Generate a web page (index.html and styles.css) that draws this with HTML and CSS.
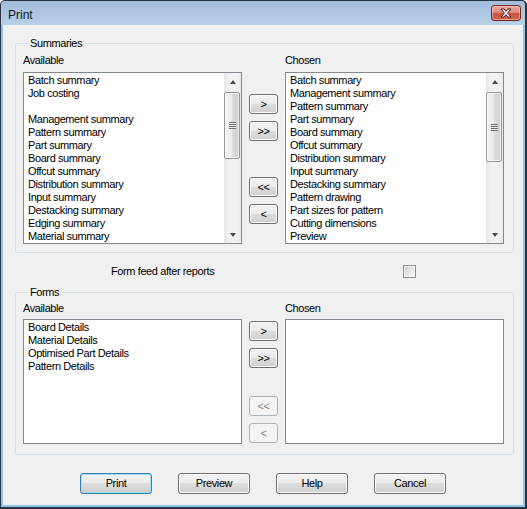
FILE: index.html
```html
<!DOCTYPE html>
<html>
<head>
<meta charset="utf-8">
<link rel="stylesheet" href="styles.css">
</head>
<body>
<div class="window">
  <div class="titlebar">
    <span class="title">Print</span>
    <div class="close">
      <svg width="12" height="10" viewBox="0 0 12 10">
        <polygon points="1,1 4,1 6,3.4 8,1 11,1 7.6,5 11,9 8,9 6,6.6 4,9 1,9 4.4,5" fill="#fff" stroke="#4a1f1a" stroke-width="1" stroke-linejoin="round"/>
      </svg>
    </div>
  </div>
  <div class="client">
    <fieldset class="group summaries">
      <legend>Summaries</legend>
      <div class="picker">
        <div class="lbl">Available</div>
        <div></div>
        <div class="lbl">Chosen</div>
        <div class="listbox tall">
          <ul class="items">
            <li>Batch summary</li>
            <li>Job costing</li>
            <li>&nbsp;</li>
            <li>Management summary</li>
            <li>Pattern summary</li>
            <li>Part summary</li>
            <li>Board summary</li>
            <li>Offcut summary</li>
            <li>Distribution summary</li>
            <li>Input summary</li>
            <li>Destacking summary</li>
            <li>Edging summary</li>
            <li>Material summary</li>
          </ul>
          <div class="scrollbar">
            <div class="sb-btn"><span class="arr up"></span></div>
            <div class="sb-track"><div class="thumb t1"><span class="grip"></span></div></div>
            <div class="sb-btn"><span class="arr down"></span></div>
          </div>
        </div>
        <div class="movers m-sum">
          <button class="btn mv b1">&gt;</button>
          <button class="btn mv b2">&gt;&gt;</button>
          <button class="btn mv b3">&lt;&lt;</button>
          <button class="btn mv b4">&lt;</button>
        </div>
        <div class="listbox tall">
          <ul class="items">
            <li>Batch summary</li>
            <li>Management summary</li>
            <li>Pattern summary</li>
            <li>Part summary</li>
            <li>Board summary</li>
            <li>Offcut summary</li>
            <li>Distribution summary</li>
            <li>Input summary</li>
            <li>Destacking summary</li>
            <li>Pattern drawing</li>
            <li>Part sizes for pattern</li>
            <li>Cutting dimensions</li>
            <li>Preview</li>
          </ul>
          <div class="scrollbar">
            <div class="sb-btn"><span class="arr up"></span></div>
            <div class="sb-track"><div class="thumb t2"><span class="grip"></span></div></div>
            <div class="sb-btn"><span class="arr down"></span></div>
          </div>
        </div>
      </div>
    </fieldset>

    <div class="feed-row">
      <span class="feed-label">Form feed after reports</span>
      <span class="checkbox"><span class="check-inner"></span></span>
    </div>

    <fieldset class="group forms">
      <legend>Forms</legend>
      <div class="picker">
        <div class="lbl">Available</div>
        <div></div>
        <div class="lbl">Chosen</div>
        <div class="listbox short">
          <ul class="items">
            <li>Board Details</li>
            <li>Material Details</li>
            <li>Optimised Part Details</li>
            <li>Pattern Details</li>
          </ul>
        </div>
        <div class="movers m-forms">
          <button class="btn mv b1">&gt;</button>
          <button class="btn mv b2">&gt;&gt;</button>
          <button class="btn mv b3" disabled>&lt;&lt;</button>
          <button class="btn mv b4" disabled>&lt;</button>
        </div>
        <div class="listbox short"></div>
      </div>
    </fieldset>

    <div class="actions">
      <button class="btn wide default">Print</button>
      <button class="btn wide">Preview</button>
      <button class="btn wide">Help</button>
      <button class="btn wide">Cancel</button>
    </div>
  </div>
</div>
</body>
</html>
```

FILE: styles.css
```css
* { box-sizing: border-box; }
html, body { margin: 0; padding: 0; background: #ffffff; }
body {
  font-family: "Liberation Sans", Arial, sans-serif;
  font-size: 11px;
  letter-spacing: -0.4px;
  color: #000;
}

.window {
  width: 527px;
  height: 509px;
  border-style: solid;
  border-color: #2b3542;
  border-width: 1px 2px 2px 1px;
  border-radius: 5px 5px 0 0;
  padding: 0 2px 2px 2px;
  background: linear-gradient(to bottom, #a3bcda 0, #b8cfe8 24px, #8cc6ea 24px, #8cc6ea 100%);
  display: flex;
  flex-direction: column;
}

.titlebar {
  height: 24px;
  flex: none;
  display: flex;
  justify-content: space-between;
  align-items: flex-start;
  padding-top: 4px;
}
.title {
  font-size: 12px;
  line-height: 16px;
  letter-spacing: 0;
  margin: 2px 0 0 5px;
  color: #101820;
}
.close {
  width: 30px;
  height: 16px;
  margin-right: 2px;
  border: 1px solid #6b2a22;
  border-radius: 3px;
  background: linear-gradient(to bottom, #e9aa9f 0, #dc8a7c 45%, #c8503e 55%, #d0654f 100%);
  box-shadow: inset 0 0 0 1px rgba(255, 220, 210, 0.45);
  display: flex;
  align-items: center;
  justify-content: center;
}
.close svg { display: block; }

.client {
  flex: 1;
  background: #f0f0f0;
  display: flex;
  flex-direction: column;
  padding: 0 9px 0 12px;
}

fieldset.group {
  margin: 11px 0 0 0;
  border: 1px solid #d5dfe5;
  border-radius: 3px;
  min-width: 0;
}
fieldset.summaries { padding: 4px 8px 8px 7px; }
fieldset.forms { margin-top: 7px; padding: 3px 8px 10px 7px; }

legend {
  padding: 0 1px;
  margin-left: 6px;
  line-height: 14px;
}

.picker {
  display: grid;
  grid-template-columns: 219px 29px 219px;
  column-gap: 7px;
}
.lbl { line-height: 13px; margin-bottom: 5px; }
.forms .lbl { margin-bottom: 4px; }

.listbox {
  border: 1px solid #828790;
  background: #fff;
  display: flex;
}
.listbox.tall { height: 172px; }
.listbox.short { height: 125px; }

.items {
  list-style: none;
  margin: 0;
  padding: 1px 4px 0 4px;
  flex: 1;
  overflow: hidden;
}
.items li { line-height: 13px; height: 13px; white-space: nowrap; }

.scrollbar {
  width: 17px;
  flex: none;
  display: flex;
  flex-direction: column;
  background: linear-gradient(to right, #e6e6e6, #f2f2f2 30%, #f2f2f2 70%, #ebebeb);
}
.sb-btn {
  height: 17px;
  flex: none;
  display: flex;
  align-items: center;
  justify-content: center;
}
.arr { width: 0; height: 0; border-left: 3.5px solid transparent; border-right: 3.5px solid transparent; }
.arr.up { border-bottom: 4px solid #4a4a4a; }
.arr.down { border-top: 4px solid #4a4a4a; }
.sb-track { flex: 1; padding-top: 2px; }
.thumb {
  margin: 0 1px 0 0;
  border: 1px solid #979797;
  border-radius: 2px;
  background: linear-gradient(to right, #f3f3f3 0, #ebebeb 45%, #dbdbdb 55%, #cdcdcd 100%);
  box-shadow: inset 0 0 0 1px rgba(255,255,255,0.7);
  display: flex;
  align-items: center;
  justify-content: center;
}
.thumb.t1 { height: 67px; }
.thumb.t2 { height: 70px; }
.grip {
  width: 7px;
  height: 7px;
  background: repeating-linear-gradient(to bottom, #6f6f6f 0, #6f6f6f 1px, #eeeeee 1px, #eeeeee 2px);
}

.movers { display: flex; flex-direction: column; }
.btn {
  font-family: inherit;
  font-size: 11px;
  letter-spacing: -0.4px;
  color: #000;
  border: 1px solid #707070;
  border-radius: 3px;
  background: linear-gradient(to bottom, #f2f2f2 0, #ebebeb 50%, #dddddd 50%, #cfcfcf 100%);
  box-shadow: inset 0 0 0 1px #fbfbfb;
  padding: 0;
  margin: 0;
  line-height: 18px;
  text-align: center;
}
.btn.mv { width: 29px; height: 20px; }
.btn:disabled {
  border-color: #adb2b5;
  background: #f4f4f4;
  box-shadow: none;
  color: #838383;
}
.m-sum .b1 { margin-top: 22px; }
.m-sum .b2 { margin-top: 7px; }
.m-sum .b3 { margin-top: 36px; }
.m-sum .b4 { margin-top: 7px; }
.m-forms .b1 { margin-top: 2px; }
.m-forms .b2 { margin-top: 7px; }
.m-forms .b3 { margin-top: 28px; }
.m-forms .b4 { margin-top: 7px; }

.feed-row {
  margin-top: 12px;
  height: 13px;
  display: flex;
  align-items: center;
  padding-left: 96px;
}
.feed-label { width: 292px; line-height: 13px; }
.checkbox {
  width: 13px;
  height: 13px;
  border: 1px solid #8e8f8f;
  background: #f4f4f4;
  padding: 1px;
  display: block;
}
.check-inner {
  display: block;
  width: 100%;
  height: 100%;
  background: linear-gradient(135deg, #cdd0d4 0, #e6e7e9 55%, #fbfbfb 100%);
}

.actions {
  margin-top: 18px;
  display: flex;
  gap: 26px;
  padding-left: 65px;
}
.btn.wide { width: 72px; height: 21px; line-height: 19px; }
.btn.default {
  border-color: #3c7fb1;
  box-shadow: inset 0 0 0 1px #9fdcf7;
}
```
